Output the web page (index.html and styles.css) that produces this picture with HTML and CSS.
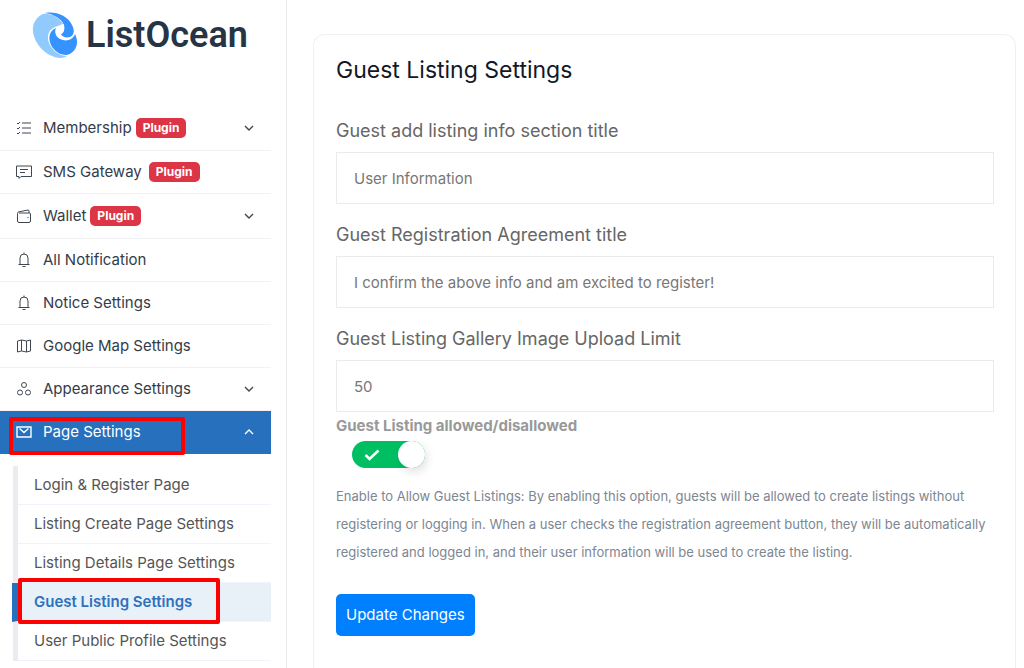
FILE: index.html
```html
<!DOCTYPE html>
<html lang="en">
<head>
<meta charset="utf-8">
<meta name="viewport" content="width=device-width, initial-scale=1">
<title>Guest Listing Settings</title>
<link rel="stylesheet" href="styles.css">
</head>
<body>
<div class="layout">
  <aside class="sidebar">
    <a class="brand" href="#">
      <svg class="brand-mark" viewBox="0 0 46 46" aria-hidden="true">
        <path fill="#90caff" d="M11 2C4 5 0 12 1 20c2 13 14 25 27 26 3 0 5-1 7-2-8 0-15-6-18-13-3-8 0-15 9-17 2-1 4-2 5-2C27 5 18 1 11 2z"/>
        <path fill="#3592ff" d="M13 1c11-2 23 3 27 12 3 6 2 10-2 12-4 1-8 0-9-3 3-1 4-5 3-9C29 6 21 2 13 1z"/>
        <path fill="#3592ff" d="M24 16c-7 3-8 10-5 17 3 6 9 10 15 10 7-1 11-7 11-13 0-3-1-6-2-8-2 6-9 8-15 5-4-2-6-7-4-11z"/>
        <path fill="#fff" d="M32 12c-4 1-7 3-8 7 0 3 2 6 5 7-1-2 0-3 0-4 2-1 3-3 2-4-2 0-2-2 1-6z"/>
      </svg>
      <span class="brand-name">ListOcean</span>
    </a>
    <nav class="menu" aria-label="Main">
      <a class="item tall" href="#">
        <svg class="icon" viewBox="0 0 16 16" aria-hidden="true"><path d="M6 3h9M6 8h9M6 13h9M1 3l1 1 2-2M1 8l1 1 2-2M1 13l1 1 2-2"/></svg>
        <span class="label">Membership</span><span class="badge">Plugin</span>
        <svg class="chevron" viewBox="0 0 12 12" aria-hidden="true"><path d="M2 4l4 4 4-4"/></svg>
      </a>
      <a class="item" href="#">
        <svg class="icon" viewBox="0 0 16 16" aria-hidden="true"><path d="M.5 2h15v10.500H5L3 14.500v-2H.5zM4 5.500h8M4 8.500h5"/></svg>
        <span class="label">SMS Gateway</span><span class="badge spaced">Plugin</span>
      </a>
      <a class="item tall" href="#">
        <svg class="icon" viewBox="0 0 16 16" aria-hidden="true"><path d="M3 5h10.500q1 0 1 1v7q0 1.500-1.500 1.500H3q-1.500 0-1.500-1.500V5.500Q1.500 4 3 3.800L12 2q1 0 1 1v2M11.500 9.500h1"/></svg>
        <span class="label">Wallet</span><span class="badge">Plugin</span>
        <svg class="chevron" viewBox="0 0 12 12" aria-hidden="true"><path d="M2 4l4 4 4-4"/></svg>
      </a>
      <a class="item" href="#">
        <svg class="icon" viewBox="0 0 16 16" aria-hidden="true"><path d="M2.500 12.500h11M4 12.500V6q0-4 4-4t4 4v6.500M8 2V.5M6.500 14.500h3"/></svg>
        <span class="label">All Notification</span>
      </a>
      <a class="item" href="#">
        <svg class="icon" viewBox="0 0 16 16" aria-hidden="true"><path d="M2.500 12.500h11M4 12.500V6q0-4 4-4t4 4v6.500M8 2V.5M6.500 14.500h3"/></svg>
        <span class="label">Notice Settings</span>
      </a>
      <a class="item" href="#">
        <svg class="icon" viewBox="0 0 16 16" aria-hidden="true"><path d="M1.500 3L5.500 2l5 1 4-1v11l-4 1-5-1-4 1zM5.500 2v11M10.500 3v11"/></svg>
        <span class="label">Google Map Settings</span>
      </a>
      <a class="item" href="#">
        <svg class="icon" viewBox="0 0 16 16" aria-hidden="true"><circle cx="8" cy="4" r="2.500"/><circle cx="4" cy="11.500" r="2.500"/><circle cx="12" cy="11.500" r="2.500"/></svg>
        <span class="label">Appearance Settings</span>
        <svg class="chevron" viewBox="0 0 12 12" aria-hidden="true"><path d="M2 4l4 4 4-4"/></svg>
      </a>
      <a class="item current" href="#">
        <svg class="icon" viewBox="0 0 16 16" aria-hidden="true"><path d="M1 3h14v10H1zM3.500 4.500l4.500 4 4.500-4"/></svg>
        <span class="label">Page Settings</span>
        <svg class="chevron" viewBox="0 0 12 12" aria-hidden="true"><path d="M2 8l4-4 4 4"/></svg>
        <span class="mark mark-parent"></span>
      </a>
      <div class="submenu">
        <a class="sub" href="#">Login &amp; Register Page</a>
        <a class="sub" href="#">Listing Create Page Settings</a>
        <a class="sub" href="#">Listing Details Page Settings</a>
        <a class="sub active" href="#">Guest Listing Settings<span class="mark mark-child"></span></a>
        <a class="sub" href="#">User Public Profile Settings</a>
      </div>
    </nav>
  </aside>
  <main class="content">
    <form class="card">
      <h1 class="title">Guest Listing Settings</h1>
      <div class="field">
        <label class="field-label" for="info">Guest add listing info section title</label>
        <input class="input" id="info" type="text" value="User Information">
      </div>
      <div class="field">
        <label class="field-label" for="agree">Guest Registration Agreement title</label>
        <input class="input" id="agree" type="text" value="I confirm the above info and am excited to register!">
      </div>
      <div class="field">
        <label class="field-label" for="limit">Guest Listing Gallery Image Upload Limit</label>
        <input class="input" id="limit" type="text" value="50">
      </div>
      <label class="switch-label" for="allowed">Guest Listing allowed/disallowed</label>
      <span class="switch">
        <input class="switch-input" id="allowed" type="checkbox" checked>
        <svg class="tick" viewBox="0 0 16 12" aria-hidden="true"><path d="M1.500 6l4 4 9-8.500"/></svg>
      </span>
      <p class="help">Enable to Allow Guest Listings: By enabling this option, guests will be allowed to create listings without registering or logging in. When a user checks the registration agreement button, they will be automatically registered and logged in, and their user information will be used to create the listing.</p>
      <button class="button" type="button">Update Changes</button>
    </form>
  </main>
</div>
</body>
</html>
```
FILE: styles.css
```css
* { box-sizing: border-box; }
body {
  margin: 0;
  background: #fff;
  color: #333c48;
  font: 15px/20px Inter, "Open Sans", sans-serif;
}
a { color: inherit; text-decoration: none; }
.layout {
  display: flex;
  height: 100vh;
  overflow: hidden;
}
.sidebar {
  flex: 0 0 287px;
  padding-right: 15px;
  border-right: 1px solid #ebebeb;
}
.brand {
  display: flex;
  align-items: center;
  gap: 8px;
  padding: 12px 0 0 32px;
}
.brand-mark { width: 46px; height: 46px; }
.brand-name {
  color: #263445;
  font: 600 36px/46px Roboto, sans-serif;
}
.menu { padding-top: 48px; }
.item {
  position: relative;
  display: flex;
  align-items: center;
  height: 43px;
  padding: 0 16px;
  border-bottom: 1px solid #f2f2f4;
}
.item.tall { height: 45px; }
.icon, .chevron {
  fill: none;
  stroke: #3f4751;
}
.icon { width: 16px; height: 16px; margin-right: 11px; }
.chevron { width: 12px; height: 12px; margin-left: auto; stroke-width: 1.400; }
.badge {
  margin-left: 4px;
  padding: 0 7px;
  border-radius: 5px;
  background: #dc3545;
  color: #fff;
  font-size: 12px;
  font-weight: 700;
}
.badge.spaced { margin-left: 7px; }
.item.current {
  border-color: #2670be;
  background: #2670be;
  color: #fff;
}
.current .icon, .current .chevron { stroke: #fff; stroke-width: 1.400; }
.mark {
  position: absolute;
  border: 4px solid #fe0000;
  border-radius: 2px;
}
.mark-parent { inset: 6px 86px -2px 9px; }
.mark-child { inset: -5px 51px -3px 0; }
.submenu {
  margin: 12px 0 0 13px;
  border-left: 5px solid #ebebf1;
}
.sub {
  position: relative;
  display: block;
  height: 39px;
  padding: 9px 16px;
  border-bottom: 1px solid #f0f4fa;
  color: #555;
}
.sub.active {
  margin-left: -6px;
  border-left: 6px solid #2670be;
  background: #e8f0f8;
  color: #2f70be;
  font-weight: 600;
}
.content {
  flex: 1;
  min-width: 0;
  padding: 34px 8px 0 26px;
}
.card {
  min-height: 100%;
  padding: 19px 21px 20px 22px;
  border: 1px solid #f0f0f2;
  border-bottom: 0;
  border-radius: 12px 12px 0 0;
}
.title {
  margin: 0 0 32px;
  color: #111827;
  font-size: 23px;
  font-weight: 400;
  line-height: 32px;
}
.field { margin-bottom: 18px; }
.field-label {
  display: block;
  margin-bottom: 8px;
  color: #666;
  font-size: 18px;
  line-height: 26px;
}
.input {
  display: block;
  width: 100%;
  height: 52px;
  padding: 0 17px;
  border: 1px solid #ebebee;
  background: #fff;
  color: #777;
  font: inherit;
}
.switch-label {
  display: block;
  margin-top: -14px;
  color: #999;
  font-weight: 700;
}
.switch {
  position: relative;
  display: block;
  width: 73px;
  height: 27px;
  margin: 5px 0 0 16px;
}
.switch-input {
  display: flex;
  width: 100%;
  height: 27px;
  margin: 0;
  appearance: none;
  justify-content: flex-end;
  border-radius: 14px;
  background: #00bf63;
}
.switch-input::after {
  content: "";
  width: 27px;
  height: 27px;
  border-radius: 50%;
  background: #fff;
  box-shadow: 2px 4px 10px rgba(0, 0, 0, .12);
}
.switch-input:not(:checked) { justify-content: flex-start; background: #ccc; }
.tick {
  position: absolute;
  top: 8px;
  left: 12px;
  width: 16px;
  height: 12px;
  fill: none;
  stroke: #fff;
  stroke-width: 2.500;
}
.help {
  margin: 14px 0 28px;
  color: #7d8691;
  font-size: 13px;
  line-height: 28px;
}
.button {
  height: 42px;
  padding: 0 10px;
  border: 0;
  border-radius: 5px;
  background: #007fff;
  color: #fff;
  font: inherit;
}
```
